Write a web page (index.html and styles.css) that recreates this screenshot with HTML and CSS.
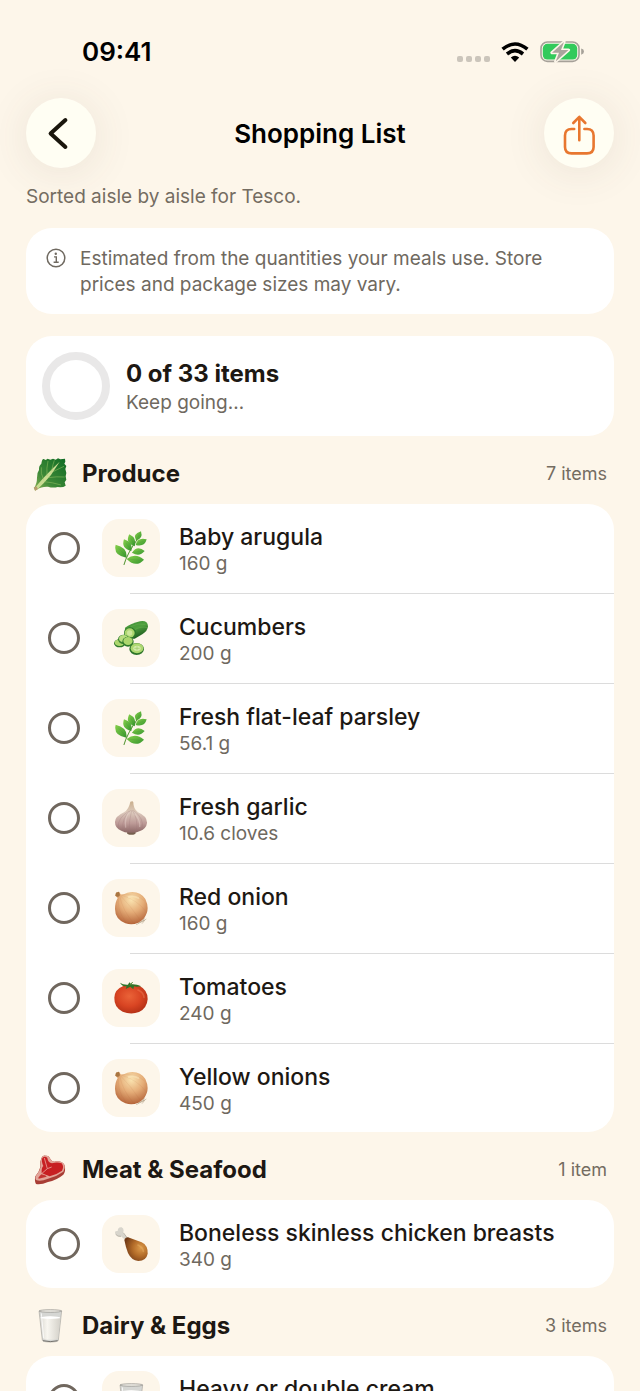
FILE: index.html
```html
<!DOCTYPE html>
<html lang="en">
<head>
<meta charset="utf-8">
<meta name="viewport" content="width=device-width, initial-scale=1">
<title>Shopping List</title>
<link rel="stylesheet" href="styles.css">
</head>
<body>
<svg class="sprite" aria-hidden="true">
  <defs>
    <linearGradient id="gLeaf" x1="0" y1="0" x2="1" y2="1"><stop offset="0" stop-color="#86d04a"/><stop offset="1" stop-color="#35952f"/></linearGradient>
    <linearGradient id="gLettuce" x1="0" y1="1" x2="1" y2="0"><stop offset="0" stop-color="#8fb457"/><stop offset=".35" stop-color="#3f8a38"/><stop offset="1" stop-color="#0f6b24"/></linearGradient>
    <linearGradient id="gCuke" x1="0" y1="0" x2=".5" y2="1"><stop offset="0" stop-color="#3d8f38"/><stop offset=".5" stop-color="#4f9f3e"/><stop offset="1" stop-color="#1c5a1e"/></linearGradient>
    <linearGradient id="gGarlic" x1="0" y1="0" x2="0" y2="1"><stop offset="0" stop-color="#c9ae8c"/><stop offset=".35" stop-color="#dccabc"/><stop offset=".7" stop-color="#bd9a97"/><stop offset="1" stop-color="#8a6664"/></linearGradient>
    <radialGradient id="gOnion" cx=".5" cy=".25" r=".75"><stop offset="0" stop-color="#fae3b0"/><stop offset=".5" stop-color="#e5ad78"/><stop offset="1" stop-color="#b5653a"/></radialGradient>
    <radialGradient id="gTomato" cx=".45" cy=".4" r=".7"><stop offset="0" stop-color="#ea6338"/><stop offset=".5" stop-color="#d94523"/><stop offset="1" stop-color="#a92a12"/></radialGradient>
    <radialGradient id="gMeat" cx=".7" cy=".45" r=".7"><stop offset="0" stop-color="#dc9a4a"/><stop offset=".5" stop-color="#b26b28"/><stop offset="1" stop-color="#733b17"/></radialGradient>
    <linearGradient id="gMilk" x1="0" y1="0" x2="1" y2="0"><stop offset="0" stop-color="#dcdad3"/><stop offset=".35" stop-color="#f8f6f0"/><stop offset="1" stop-color="#d4d1c9"/></linearGradient>
  </defs>
  <symbol id="herb" viewBox="0 0 102 102">
    <path d="M30 101Q38 70 72 22" fill="none" stroke="#5c9a3b" stroke-width="3" stroke-linecap="round"/>
    <g fill="url(#gLeaf)">
      <path d="M66 28Q54 10 81 1Q88 24 66 28Z"/>
      <path d="M62 46Q32 36 46 10Q70 22 62 46Z"/>
      <path d="M65 42Q70 18 98 25Q92 49 65 42Z"/>
      <path d="M52 60Q20 52 30 25Q58 34 52 60Z"/>
      <path d="M54 65Q70 42 92 60Q76 79 54 65Z"/>
      <path d="M37 80Q-3 74 5 41Q42 50 37 80Z"/>
      <path d="M38 84Q64 64 90 86Q66 112 38 84Z"/>
    </g>
    <path d="M30 100Q38 70 76 12M39 79L14 52M41 84L80 88M52 58L36 36M54 65L80 60M62 43L50 22M66 41L88 30" fill="none" stroke="#3a8428" stroke-width="1" opacity=".5"/>
  </symbol>
  <symbol id="cucumber" viewBox="0 0 102 102">
    <path d="M33 20Q50 8 78 1Q101-3 102 16Q101 30 86 39L62 53Q38 56 32 39Z" fill="url(#gCuke)"/>
    <path d="M50 17Q72 5 94 10M60 27Q82 14 99 20" stroke="#75b955" stroke-width="2" fill="none" opacity=".6"/>
    <ellipse cx="48" cy="36" rx="18" ry="17" fill="#2f7a2b"/><ellipse cx="47" cy="36" rx="15" ry="14" fill="#acd66e"/>
    <ellipse cx="47" cy="36" rx="8" ry="8" fill="#cce69a"/>
    <ellipse cx="17" cy="67" rx="17" ry="12" fill="#2f7a2b"/><ellipse cx="17" cy="65" rx="15" ry="10" fill="#acd66e"/>
    <ellipse cx="29" cy="55" rx="17" ry="14" fill="#3b8433"/><ellipse cx="29" cy="53" rx="14" ry="11" fill="#b9dd80"/>
    <ellipse cx="42" cy="62" rx="17" ry="15" fill="#2f7a2b"/><ellipse cx="42" cy="60" rx="14" ry="12" fill="#acd66e"/>
    <ellipse cx="68" cy="84" rx="22" ry="18" fill="#2c7429"/><ellipse cx="69" cy="82" rx="19" ry="15" fill="#add870"/>
    <ellipse cx="69" cy="82" rx="11" ry="8" fill="#d3ebaa"/><path d="M61 82h16M69 76v12" stroke="#9bc866" stroke-width="2"/>
  </symbol>
  <symbol id="garlic" viewBox="0 0 102 102">
    <ellipse cx="52" cy="95" rx="13" ry="6" fill="#76604f"/>
    <path d="M49 2Q57-2 58 4Q58 24 72 34Q100 46 99 66Q97 84 76 91Q62 97 51 95Q34 97 22 89Q2 82 3 62Q4 46 30 34Q45 24 49 2Z" fill="url(#gGarlic)"/>
    <path d="M50 28Q22 52 27 86M53 28Q44 60 46 93M55 28Q73 52 67 92M58 28Q92 52 84 84M46 30Q12 48 12 80" fill="none" stroke="#9c7778" stroke-width="2" opacity=".4"/>
    <path d="M45 34Q31 52 35 80M62 38Q80 58 77 78" fill="none" stroke="#f0e0da" stroke-width="4" opacity=".35"/>
  </symbol>
  <symbol id="onion" viewBox="0 0 102 102">
    <path d="M72 96L92 88L84 98M80 94L97 84M86 90L92 80M66 102L82 92" stroke="#a9977a" stroke-width="1.5" fill="none"/>
    <path d="M6 5L15 2L20 10Q28 12 40 5Q76-3 94 24Q110 57 89 83Q65 107 34 97Q3 84 3 54Q3 34 11 21L4 14Z" fill="url(#gOnion)"/>
    <path d="M15 14Q6 55 36 94M17 14Q25 58 60 98M19 13Q52 48 80 89M22 12Q72 28 96 62M24 11Q70 8 91 30" fill="none" stroke="#a95b2c" stroke-width="1.3" opacity=".2"/>
    <path d="M6 5L15 2L18 13L12 18L4 14Z" fill="#a87541"/>
    <path d="M44 18Q60 12 73 21" stroke="#fff2cb" stroke-width="6" fill="none" stroke-linecap="round" opacity=".4"/>
  </symbol>
  <symbol id="tomato" viewBox="0 0 102 102">
    <path d="M28 15Q51 8 77 15Q101 27 101 54Q99 82 75 93Q51 102 26 92Q0 79 1 50Q2 25 28 15Z" fill="url(#gTomato)"/>
    <path d="M72 27Q89 34 90 49" stroke="#ff9a70" stroke-width="5" fill="none" stroke-linecap="round" opacity=".3"/>
    <path d="M18 5Q27 12 42 11L46 4L52 10Q67 9 82 16Q67 18 60 16L58 25L49 17L35 24L38 16Q24 17 18 5Z" fill="#2f7328"/>
    <path d="M48 13L56 3" stroke="#578c39" stroke-width="3"/>
  </symbol>
  <symbol id="drumstick" viewBox="0 0 102 102">
    <path d="M33 38L21 28Q11 30 5 22Q-1 11 11 12Q12-1 23 1Q32 5 27 17L41 34Z" fill="#d8d5cc"/>
    <path d="M21 28Q11 30 5 22M28 17L40 33" fill="none" stroke="#9e9a90" stroke-width="2"/>
    <path d="M31 39Q34 28 46 32Q66 39 83 46Q102 55 101 80Q97 101 73 102Q52 100 42 78Q35 60 31 39Z" fill="url(#gMeat)"/>
    <path d="M34 39L43 33" stroke="#6b3516" stroke-width="3"/>
    <path d="M72 54Q87 61 88 73" stroke="#f2bd70" stroke-width="5" fill="none" stroke-linecap="round" opacity=".35"/>
  </symbol>
  <symbol id="lettuce" viewBox="0 0 102 102">
    <path d="M3 93Q12 80 12 62Q11 48 18 39Q17 26 25 20Q27 5 32 6L38 9L44 5L52 8L60 5L68 8L75 4L82 7L96 5L97 14L94 20L100 27L97 36L100 48L98 58L100 68L95 76L98 86Q90 92 74 90Q60 94 45 89Q25 88 13 97L6 101Z" fill="url(#gLettuce)"/>
    <path d="M4 95Q26 68 42 52Q58 34 80 14L54 54Q34 78 12 98Z" fill="#c9dc92"/>
    <path d="M42 57Q40 33 45 12M32 68Q22 50 25 31M56 42Q60 20 64 10M45 62Q72 58 95 60M34 74Q58 76 84 84M60 44Q80 34 93 28" fill="none" stroke="#9cc768" stroke-width="2" opacity=".75"/>
    <path d="M2 92L10 88L15 96L7 101Z" fill="#b89b6e"/>
  </symbol>
  <symbol id="steak" viewBox="0 0 102 102">
    <path d="M25 16Q28 5 39 8Q48 7 52 18Q58 29 69 25Q88 23 95 37Q99 55 91 65Q70 82 45 87Q24 96 9 93Q4 85 7 70Q18 58 22 42Q19 28 25 16Z" fill="#a83d35"/>
    <path d="M26 14Q29 5 39 8Q48 7 52 18Q58 29 69 25Q88 23 95 37Q97 46 91 56Q70 71 45 77Q24 86 11 82Q5 79 9 68Q20 56 23 42Q20 27 26 14Z" fill="#e3a498"/>
    <path d="M28 15Q36 7 43 15Q45 30 57 31Q72 26 86 31Q94 41 87 53Q69 66 50 70Q34 64 26 60Q25 44 31 39Q24 24 28 15Z" fill="#c71f22"/>
    <path d="M25 64Q38 66 41 71L17 77Q13 75 25 64Z" fill="#c33431"/>
    <path d="M34 15L43 47L27 61M43 47L56 42" fill="none" stroke="#e8a097" stroke-width="2.5"/>
  </symbol>
  <symbol id="milk" viewBox="0 0 102 102">
    <path d="M18 6L86 6L76 94Q75 99 52 99Q29 99 28 94Z" fill="#d5d6d3" stroke="#96958f" stroke-width="1.5"/>
    <path d="M22 26Q52 19 82 26L75 89Q52 96 30 89Z" fill="url(#gMilk)"/>
    <ellipse cx="52" cy="26" rx="30" ry="4" fill="#fff"/>
    <ellipse cx="52" cy="6" rx="34" ry="4" fill="#e8e6df" stroke="#94938e" stroke-width="2"/>
    <path d="M30 95Q52 101 74 95" fill="none" stroke="#75736e" stroke-width="3"/>
    <path d="M25 13L32 87" stroke="#fff" stroke-width="3" opacity=".8"/>
  </symbol>
</svg>

<div class="screen">
  <header class="top">
    <div class="status">
      <time class="clock">09:41</time>
      <div class="indicators">
        <span class="dots"><i></i><i></i><i></i><i></i></span>
        <svg class="wifi" viewBox="0 0 28 20" aria-label="Wi-Fi" role="img">
          <g fill="none" stroke="#000" stroke-width="3.6"><path d="M1.6 7.2Q14-3.2 26.4 7.2"/><path d="M6 12Q14 5.4 22 12"/></g>
          <path d="M9.8 15.6Q14 12.1 18.2 15.6L14 20Z"/>
        </svg>
        <svg class="battery" viewBox="0 0 45 22" aria-label="Charging" role="img">
          <rect x="1" y="1" width="38" height="19.4" rx="6.4" fill="none" stroke="#a6a199" stroke-width="1.6"/>
          <path d="M41.2 7.5Q44 8.2 44 10.6Q44 13 41.2 13.7Z" fill="#a6a199"/>
          <rect x="2.8" y="2.8" width="34.4" height="15.8" rx="4.6" fill="#32ca5b"/>
          <path d="M24 1L12 11.7H19L15.7 20.4L28.5 9H21Z" fill="#aaa59d" stroke="#fdf6ea" stroke-width="3.2" stroke-linejoin="round" paint-order="stroke"/>
        </svg>
      </div>
    </div>
    <nav class="nav">
      <button class="round" type="button" aria-label="Back">
        <svg class="icon" viewBox="0 0 40 40"><path d="M24.4 7L9.6 20.5L24.4 34" fill="none" stroke="#1a160c" stroke-width="4" stroke-linecap="round" stroke-linejoin="round"/></svg>
      </button>
      <h1 class="title">Shopping List</h1>
      <button class="round" type="button" aria-label="Share">
        <svg class="icon" viewBox="0 0 40 40"><g fill="none" stroke="#e8772f" stroke-width="2.6" stroke-linecap="round" stroke-linejoin="round"><path d="M15.2 16H12.5Q6 16 6 22.5V34Q6 40.4 12.5 40.4H28Q34.6 40.4 34.6 34V22.5Q34.6 16 28 16H25.4"/><path d="M20.3 27.3V4M14.3 10L20.3 3.8L26.3 10"/></g></svg>
      </button>
    </nav>
  </header>

  <main class="content">
    <p class="sorted">Sorted aisle by aisle for Tesco.</p>
    <div class="card note">
      <svg class="info" viewBox="0 0 20 20" aria-hidden="true"><circle cx="10" cy="10" r="8.8" fill="none" stroke="#6f6960" stroke-width="1.5"/><circle cx="9.8" cy="5.8" r="1.2" fill="#6f6960"/><path d="M8 8.9H10.3V14.2M7.6 14.3H12.7" fill="none" stroke="#6f6960" stroke-width="1.4"/></svg>
      <p class="note-text">Estimated from the quantities your meals use. Store prices and package sizes may vary.</p>
    </div>
    <div class="card progress">
      <svg class="ring" viewBox="0 0 68 68" aria-hidden="true"><circle cx="34" cy="34" r="30" fill="none" stroke="#e9e8e8" stroke-width="8"/></svg>
      <div class="progress-text">
        <p class="progress-title">0 of 33 items</p>
        <p class="progress-sub">Keep going…</p>
      </div>
    </div>

    <section>
      <div class="section-head"><svg class="emoji" aria-hidden="true"><use href="#lettuce"/></svg><h2 class="section-title">Produce</h2><span class="count">7 items</span></div>
      <ul class="card list">
        <li class="item"><label class="row"><input class="check" type="checkbox"><span class="tile"><svg class="emoji" aria-hidden="true"><use href="#herb"/></svg></span><span class="text"><span class="name">Baby arugula</span><span class="amount">160 g</span></span></label></li>
        <li class="item"><label class="row"><input class="check" type="checkbox"><span class="tile"><svg class="emoji" aria-hidden="true"><use href="#cucumber"/></svg></span><span class="text"><span class="name">Cucumbers</span><span class="amount">200 g</span></span></label></li>
        <li class="item"><label class="row"><input class="check" type="checkbox"><span class="tile"><svg class="emoji" aria-hidden="true"><use href="#herb"/></svg></span><span class="text"><span class="name">Fresh flat-leaf parsley</span><span class="amount">56.1 g</span></span></label></li>
        <li class="item"><label class="row"><input class="check" type="checkbox"><span class="tile"><svg class="emoji" aria-hidden="true"><use href="#garlic"/></svg></span><span class="text"><span class="name">Fresh garlic</span><span class="amount">10.6 cloves</span></span></label></li>
        <li class="item"><label class="row"><input class="check" type="checkbox"><span class="tile"><svg class="emoji" aria-hidden="true"><use href="#onion"/></svg></span><span class="text"><span class="name">Red onion</span><span class="amount">160 g</span></span></label></li>
        <li class="item"><label class="row"><input class="check" type="checkbox"><span class="tile"><svg class="emoji" aria-hidden="true"><use href="#tomato"/></svg></span><span class="text"><span class="name">Tomatoes</span><span class="amount">240 g</span></span></label></li>
        <li class="item"><label class="row"><input class="check" type="checkbox"><span class="tile"><svg class="emoji" aria-hidden="true"><use href="#onion"/></svg></span><span class="text"><span class="name">Yellow onions</span><span class="amount">450 g</span></span></label></li>
      </ul>
    </section>

    <section>
      <div class="section-head"><svg class="emoji" aria-hidden="true"><use href="#steak"/></svg><h2 class="section-title">Meat &amp; Seafood</h2><span class="count">1 item</span></div>
      <ul class="card list">
        <li class="item"><label class="row"><input class="check" type="checkbox"><span class="tile"><svg class="emoji" aria-hidden="true"><use href="#drumstick"/></svg></span><span class="text"><span class="name">Boneless skinless chicken breasts</span><span class="amount">340 g</span></span></label></li>
      </ul>
    </section>

    <section>
      <div class="section-head"><svg class="emoji" aria-hidden="true"><use href="#milk"/></svg><h2 class="section-title">Dairy &amp; Eggs</h2><span class="count">3 items</span></div>
      <ul class="card list">
        <li class="item"><label class="row"><input class="check" type="checkbox"><span class="tile"><svg class="emoji" aria-hidden="true"><use href="#milk"/></svg></span><span class="text"><span class="name">Heavy or double cream</span></span></label></li>
      </ul>
    </section>
  </main>
</div>
</body>
</html>
```

FILE: styles.css
```css
* { box-sizing: border-box; }

body {
  margin: 0;
  background: #fdf6ea;
  color: #1d1813;
  font-family: Inter, "Liberation Sans", sans-serif;
}

h1, h2, p, ul { margin: 0; padding: 0; }
ul { list-style: none; }
svg { display: block; flex: none; }

.sprite { position: absolute; width: 0; height: 0; }

.screen {
  height: 100vh;
  overflow-y: auto;
  scrollbar-width: none;
}

/* Status bar and navigation */
.top { color: #000; }

.status {
  display: flex;
  justify-content: space-between;
  align-items: center;
  padding: 32px 55px 26px 82px;
}
.clock { font-size: 26px; line-height: 40px; font-weight: 600; }
.indicators { display: flex; align-items: center; gap: 11px; }
.dots { display: flex; gap: 3px; padding-top: 14px; }
.dots i { width: 6px; height: 6px; border-radius: 2px; background: #cbc5bb; }
.wifi { width: 28px; height: 20px; }
.battery { width: 45px; height: 22px; }

.nav {
  display: flex;
  justify-content: space-between;
  align-items: center;
  padding: 0 26px;
}
.round {
  display: grid;
  place-items: center;
  width: 70px;
  height: 70px;
  padding: 0;
  border: 0;
  border-radius: 50%;
  background: #fffef3;
  box-shadow: 0 4px 44px rgba(90, 75, 60, 0.11);
}
.icon { width: 40px; height: 40px; overflow: visible; }
.title { padding-top: 2px; font-size: 26px; line-height: 32px; font-weight: 600; }

/* Cards */
.content { padding: 16px 26px 32px; }
.card { background: #fff; border-radius: 26px; }

.sorted {
  margin-bottom: 18px;
  color: #746c61;
  font-size: 19px;
  line-height: 26px;
}

.note { display: flex; gap: 14px; padding: 18px 20px 16px; margin-bottom: 22px; }
.info { width: 20px; height: 20px; margin-top: 2px; }
.note-text { color: #6f6960; font-size: 19px; line-height: 26px; }

.progress { display: flex; align-items: center; gap: 16px; padding: 16px; }
.ring { width: 68px; height: 68px; }
.progress-text { padding-top: 4px; }
.progress-title { font-size: 24px; line-height: 30px; font-weight: 700; }
.progress-sub { color: #6f6960; font-size: 19px; line-height: 28px; }

/* Aisles */
.section-head {
  display: flex;
  align-items: center;
  height: 68px;
  padding: 8px 7px 0;
}
.section-title { flex: 1; margin-left: 15px; font-size: 24px; line-height: 30px; font-weight: 700; }
.count { color: #746c61; font-size: 18px; line-height: 24px; }
.emoji { width: 34px; height: 34px; }

.list { overflow: hidden; }
.item + .item::before {
  content: "";
  display: block;
  height: 1px;
  margin: 1px 0 0 104px;
  background: #dcdcdc;
}
.row { display: flex; align-items: center; padding: 15px 22px; }
.check {
  flex: none;
  appearance: none;
  width: 32px;
  height: 32px;
  margin: 0 22px 0 0;
  border: 3px solid #70675e;
  border-radius: 50%;
}
.check:checked { background: #70675e; }
.tile {
  display: grid;
  place-items: center;
  flex: none;
  width: 58px;
  height: 58px;
  margin-right: 19px;
  border-radius: 17px;
  background: #fdf6ea;
}
.text { display: flex; flex-direction: column; min-height: 58px; padding-top: 3px; }
.name { font-size: 23px; line-height: 30px; font-weight: 500; }
.amount { color: #6f6960; font-size: 19px; line-height: 24px; }
```
